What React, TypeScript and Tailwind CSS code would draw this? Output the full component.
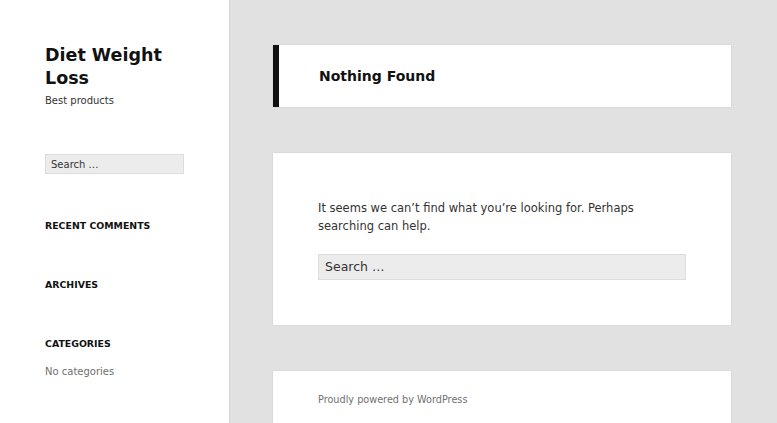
export default function App() {
  return (
    <div
      className="flex h-[423px] w-[777px] overflow-hidden bg-[#e1e1e1] text-[#333]"
      style={{ fontFamily: '"DejaVu Sans", sans-serif' }}
    >
      <aside className="w-[229px] shrink-0 bg-white pl-[45px] pr-[45px] shadow-[0_0_1px_rgba(0,0,0,0.25)]">
        <div className="pt-[44px]">
          <h1 className="text-[17.5px] font-bold leading-[23px] text-[#111]">Diet Weight Loss</h1>
          <p className="mt-[3px] text-[10px] leading-[16px] text-[#333]">Best products</p>
        </div>
        <div className="mt-[45px] flex h-[20px] items-center border border-[#ddd] bg-[#ececec] px-[5px] text-[10px] text-[#333]">
          Search …
        </div>
        <h2 className="mt-[44px] text-[9.4px] font-bold uppercase leading-[16px] text-[#111]">Recent Comments</h2>
        <h2 className="mt-[43px] text-[9.4px] font-bold uppercase leading-[16px] text-[#111]">Archives</h2>
        <h2 className="mt-[43px] text-[9.4px] font-bold uppercase leading-[16px] text-[#111]">Categories</h2>
        <p className="mt-[12px] text-[10px] leading-[16px] text-[#707070]">No categories</p>
      </aside>
      <main className="flex flex-col gap-[46px] pl-[44px] pt-[45px]">
        <header className="flex h-[62px] w-[458px] shrink-0 items-center border-l-[6px] border-[#111] bg-white pl-[40px] shadow-[0_0_1px_rgba(0,0,0,0.2)]">
          <h1 className="text-[14px] font-bold text-[#111]">Nothing Found</h1>
        </header>
        <section className="h-[172px] w-[458px] shrink-0 bg-white px-[45px] pt-[46px] shadow-[0_0_1px_rgba(0,0,0,0.2)]">
          <p className="text-[11.5px] leading-[18px] text-[#333]">
            It seems we can’t find what you’re looking for. Perhaps searching can help.
          </p>
          <div className="mt-[19px] flex h-[26px] w-[368px] items-center border border-[#ddd] bg-[#ececec] px-[6px] text-[12.5px] text-[#333]">
            Search …
          </div>
        </section>
        <footer className="h-[60px] w-[458px] shrink-0 bg-white px-[45px] pt-[21px] shadow-[0_0_1px_rgba(0,0,0,0.2)]">
          <p className="text-[9.7px] leading-[16px] text-[#707070]">Proudly powered by WordPress</p>
        </footer>
      </main>
    </div>
  );
}
